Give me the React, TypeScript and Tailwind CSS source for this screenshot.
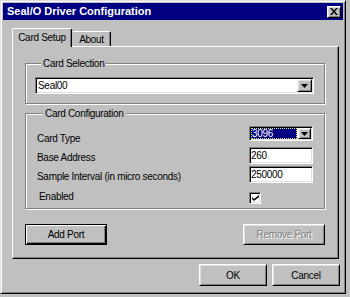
import React from "react";

const raised =
  "border border-t-white border-l-white border-r-black border-b-black shadow-[inset_1px_1px_#dfdfdf,inset_-1px_-1px_#808080]";
const sunken =
  "border border-t-[#808080] border-l-[#808080] border-r-white border-b-white shadow-[inset_1px_1px_#000,inset_-1px_-1px_#dfdfdf]";
const group =
  "border border-[#808080] shadow-[1px_1px_0_#fff,inset_1px_1px_0_#fff] m-0 min-w-0";

function Arrow() {
  return (
    <svg width="7" height="4" viewBox="0 0 7 4">
      <path d="M0 0h7L3.5 4z" fill="#000" />
    </svg>
  );
}

function DropButton({ small }: { small?: boolean }) {
  return (
    <div className={`${raised} ${small ? "w-[13px]" : "w-[15px]"} h-full bg-[#c0c0c0] flex items-center justify-center`}>
      <Arrow />
    </div>
  );
}

function Button({ label, def, disabled }: { label: string; def?: boolean; disabled?: boolean }) {
  return (
    <div
      className={`h-full w-full flex items-center justify-center ${
        def
          ? "border border-black shadow-[inset_1px_1px_#fff,inset_-1px_-1px_#000,inset_-2px_-2px_#808080]"
          : raised
      } ${disabled ? "text-[#808080] [text-shadow:1px_1px_0_#fff]" : "text-black"}`}
    >
      {label}
    </div>
  );
}

function Legend({ children }: { children: React.ReactNode }) {
  return <legend className="ml-[6px] px-[2px] bg-[#c0c0c0] leading-[13px]">{children}</legend>;
}

export default function App() {
  return (
    <div className="w-[350px] h-[297px] bg-[#c0c0c0] font-['Liberation_Sans',Arial,sans-serif] text-[10px] tracking-[-0.3px] text-black select-none">
      <div className="w-[346px] h-[294px] border border-t-[#dfdfdf] border-l-[#dfdfdf] border-r-black border-b-black shadow-[inset_1px_1px_#fff,inset_-1px_-1px_#808080] p-[2px] flex flex-col">
        {/* title bar */}
        <div className="h-[17px] bg-[#000080] flex items-center pl-[4px] pr-[2px]">
          <span className="flex-1 text-white font-bold text-[11px] tracking-normal">Seal/O Driver Configuration</span>
          <div className={`${raised} w-[14px] h-[12px] bg-[#c0c0c0] flex items-center justify-center`}>
            <svg width="8" height="7" viewBox="0 0 8 7">
              <path d="M0 0h2l2 2.4L6 0h2L5 3.5 8 7H6L4 4.6 2 7H0l3-3.5z" fill="#000" />
            </svg>
          </div>
        </div>

        <div className="flex-1 pt-[8px] pl-[9px] pr-[3px] flex flex-col">
          {/* tabs */}
          <div className="h-[18px] flex items-end">
            <div className="relative z-10 w-[60px] h-[19px] -mb-[1px] bg-[#c0c0c0] border-t border-l border-t-white border-l-white border-r border-r-black rounded-tl-[2px] rounded-tr-[2px] shadow-[inset_-1px_0_#808080] flex items-center justify-center pb-[1px]">
              Card Setup
            </div>
            <div className="w-[38px] h-[15px] ml-[1px] border-t border-t-white border-r border-r-black rounded-tr-[2px] shadow-[inset_-1px_0_#808080] flex items-center justify-center">
              About
            </div>
          </div>

          {/* panel */}
          <div className="h-[213px] mr-[1px] border border-t-white border-l-white border-r-black border-b-black shadow-[inset_-1px_-1px_#808080] pt-[10px] pl-[12px] pr-[13px] flex flex-col">
            <fieldset className={`${group} pl-[9px] pr-[10px] pt-[7px] pb-[9px]`}>
              <Legend>Card Selection</Legend>
              <div className={`${sunken} h-[17px] bg-white p-[1px] flex`}>
                <span className="flex-1 leading-[13px] pl-[1px]">Seal00</span>
                <DropButton />
              </div>
            </fieldset>

            <fieldset className={`${group} mt-[3px] pl-[11px] pr-[11px] pb-[4px]`}>
              <Legend>Card Configuration</Legend>
              <div className="flex justify-between">
                <div className="flex flex-col leading-[13px] pt-[12px]">
                  <span>Card Type</span>
                  <span className="mt-[6px]">Base Address</span>
                  <span className="mt-[6px]">Sample Interval (in micro seconds)</span>
                  <span className="mt-[7px] ml-[2px]">Enabled</span>
                </div>
                <div className="w-[64px] flex flex-col pt-[6px]">
                  <div className={`${sunken} h-[15px] bg-white p-[1px] flex`}>
                    <span className="flex-1 leading-[9px] bg-[#000080] text-white border border-dotted border-[#e8e870] mr-[1px]">3096</span>
                    <DropButton small />
                  </div>
                  <div className={`${sunken} mt-[6px] h-[17px] bg-white px-[1px] leading-[15px]`}>260</div>
                  <div className={`${sunken} mt-[2px] h-[17px] bg-white px-[1px] leading-[15px]`}>250000</div>
                  <div className={`${sunken} mt-[9px] w-[12px] h-[12px] bg-white flex items-center justify-center`}>
                    <svg width="7" height="7" viewBox="0 0 7 7">
                      <path d="M0 2l2 2 5-4v2L2 6 0 4z" fill="#000" />
                    </svg>
                  </div>
                </div>
              </div>
            </fieldset>

            <div className="mt-[15px] h-[21px] flex justify-between">
              <div className="w-[82px]">
                <Button label="Add Port" def />
              </div>
              <div className="w-[82px]">
                <Button label="Remove Port" disabled />
              </div>
            </div>
          </div>

          {/* dialog buttons */}
          <div className="mt-[5px] h-[22px] flex justify-end gap-[5px]">
            <div className="w-[68px]">
              <Button label="OK" />
            </div>
            <div className="w-[68px]">
              <Button label="Cancel" />
            </div>
          </div>
        </div>
      </div>
    </div>
  );
}
